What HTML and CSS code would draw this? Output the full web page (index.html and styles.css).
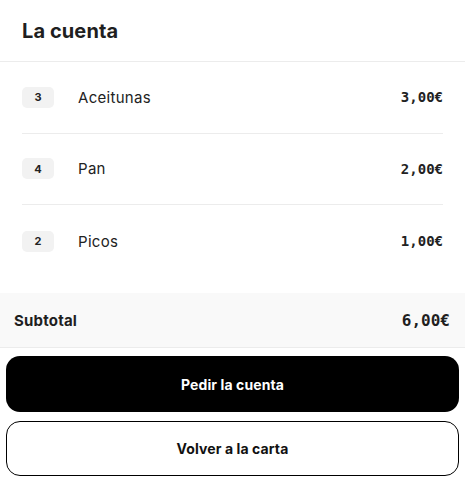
FILE: index.html
```html
<!DOCTYPE html>
<html lang="es">
<head>
<meta charset="utf-8">
<link rel="stylesheet" href="styles.css">
</head>
<body>
<div class="sheet">
  <header class="head"><h1>La cuenta</h1></header>
  <ul class="items">
    <li class="item"><span class="qty">3</span><span class="name">Aceitunas</span><span class="price">3,00€</span></li>
    <li class="item"><span class="qty">4</span><span class="name">Pan</span><span class="price">2,00€</span></li>
    <li class="item"><span class="qty">2</span><span class="name">Picos</span><span class="price">1,00€</span></li>
  </ul>
  <div class="subtotal"><span class="sub-label">Subtotal</span><span class="sub-value">6,00€</span></div>
  <div class="actions">
    <button class="btn btn-primary">Pedir la cuenta</button>
    <button class="btn btn-secondary">Volver a la carta</button>
  </div>
</div>
</body>
</html>
```
FILE: styles.css
```css
* { box-sizing: border-box; }
html, body { margin: 0; padding: 0; background: #fff; }
body { font-family: Inter, "Noto Sans", sans-serif; color: #1f1f1f; }
.sheet { width: 465px; }
.head { height: 62px; display: flex; align-items: center; padding: 0 22px; border-bottom: 1px solid #ececec; }
.head h1 { margin: 0; font-size: 20px; font-weight: 700; letter-spacing: 0.1px; color: #1f1f1f; }
.items { list-style: none; margin: 0; padding: 0 22px; }
.item { height: 71.5px; display: flex; align-items: center; border-bottom: 1px solid #ececec; }
.item:last-child { border-bottom: none; height: 72px; }
.qty { width: 32px; height: 21px; border-radius: 5px; background: #f2f2f2; font-size: 11px; font-weight: 700; display: flex; align-items: center; justify-content: center; color: #222; }
.name { margin-left: 24px; font-size: 15px; flex: 1; color: #222; letter-spacing: 0.3px; }
.price { font-family: "DejaVu Sans Mono", monospace; font-weight: 700; font-size: 14px; color: #222; }
.subtotal { margin-top: 16px; height: 55px; background: #f9f9f9; border-bottom: 1px solid #ececec; display: flex; align-items: center; justify-content: space-between; padding: 0 15px 0 14px; }
.sub-label { font-size: 15px; font-weight: 700; color: #1f1f1f; letter-spacing: 0.2px; }
.sub-value { font-family: "DejaVu Sans Mono", monospace; font-weight: 700; font-size: 16px; color: #1f1f1f; }
.actions { display: flex; flex-direction: column; gap: 9px; padding: 8px 6px 0; }
.btn { height: 55px; border-radius: 14px; font-family: inherit; font-size: 14px; font-weight: 700; letter-spacing: 0.1px; cursor: pointer; }
.btn-primary { background: #000; color: #fff; border: none; height: 56px; }
.btn-secondary { background: #fff; color: #111; border: 1px solid #000; }
```
